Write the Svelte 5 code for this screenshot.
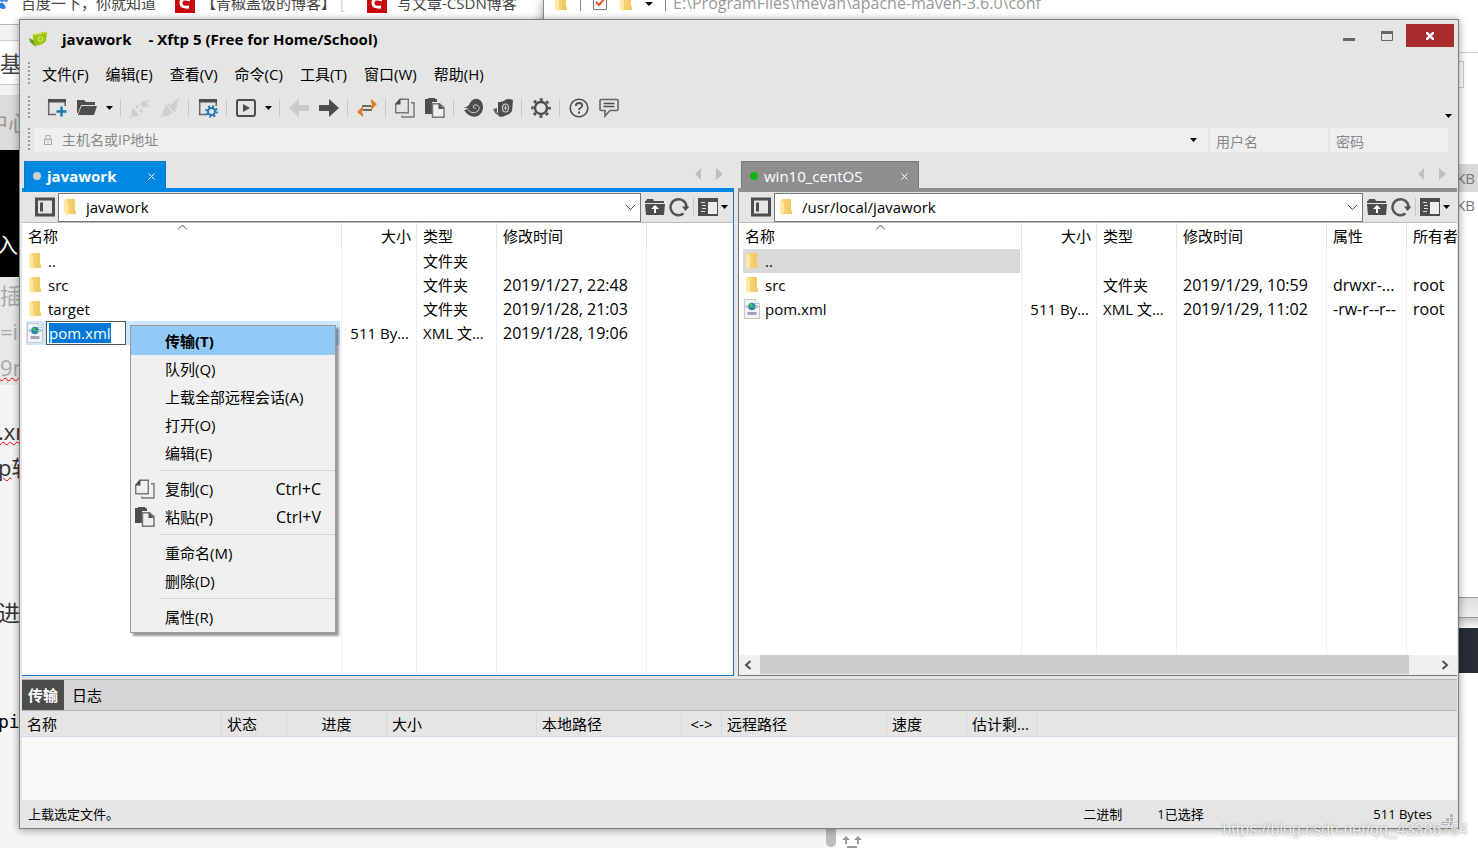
<script>
  import { onMount } from "svelte";

  const menus = ["文件(F)", "编辑(E)", "查看(V)", "命令(C)", "工具(T)", "窗口(W)", "帮助(H)"];

  // "|" is a separator, "v" a dropdown arrow, the rest are icon names
  const tools = [
    "new", "open", "v", "|", "connect", "disconnect", "|", "props", "|", "play", "v", "|",
    "back", "forward", "|", "swap", "|", "copy", "paste", "|", "shell", "xftp", "|",
    "gear", "|", "help", "chat",
  ];

  const local = {
    id: "local",
    title: "javawork",
    path: "javawork",
    columns: [
      { name: "名称", width: 320, sorted: true },
      { name: "大小", width: 75 },
      { name: "类型", width: 80 },
      { name: "修改时间", width: 150 },
      { name: "" },
    ],
    rows: [
      { icon: "folder", cells: ["..", "", "文件夹", "", ""] },
      { icon: "folder", cells: ["src", "", "文件夹", "2019/1/27, 22:48", ""] },
      { icon: "folder", cells: ["target", "", "文件夹", "2019/1/28, 21:03", ""] },
      { icon: "xml", state: "renaming", cells: ["pom.xml", "511 By...", "XML 文...", "2019/1/28, 19:06", ""] },
    ],
  };

  const remote = {
    id: "remote",
    title: "win10_centOS",
    path: "/usr/local/javawork",
    columns: [
      { name: "名称", width: 283, sorted: true },
      { name: "大小", width: 75 },
      { name: "类型", width: 80 },
      { name: "修改时间", width: 150 },
      { name: "属性", width: 80 },
      { name: "所有者" },
    ],
    rows: [
      { icon: "folder", state: "inactive", cells: ["..", "", "", "", "", ""] },
      { icon: "folder", cells: ["src", "", "文件夹", "2019/1/29, 10:59", "drwxr-...", "root"] },
      { icon: "xml", cells: ["pom.xml", "511 By...", "XML 文...", "2019/1/29, 11:02", "-rw-r--r--", "root"] },
    ],
  };

  const contextMenu = [
    { label: "传输(T)", active: true },
    { label: "队列(Q)" },
    { label: "上载全部远程会话(A)" },
    { label: "打开(O)" },
    { label: "编辑(E)" },
    null,
    { label: "复制(C)", icon: "copy", keys: "Ctrl+C" },
    { label: "粘贴(P)", icon: "paste", keys: "Ctrl+V" },
    null,
    { label: "重命名(M)" },
    { label: "删除(D)" },
    null,
    { label: "属性(R)" },
  ];

  const transferColumns = [
    { name: "名称", width: 200 },
    { name: "状态", width: 65 },
    { name: "进度", width: 100, center: true },
    { name: "大小", width: 150 },
    { name: "本地路径", width: 145 },
    { name: "<->", width: 40, center: true },
    { name: "远程路径", width: 165 },
    { name: "速度", width: 80 },
    { name: "估计剩...", width: 70 },
    { name: "" },
  ];

  let fileName = $state("pom.xml");

  // the name being edited starts out fully selected
  onMount(() => {
    const renameInput = document.querySelector("#rename");
    renameInput.focus();
    renameInput.select();
  });
</script>

{#snippet icon(name)}
  {#if name === "folder"}
    <svg class="folder" width="14" height="18" viewBox="0 0 14 18">
      <path d="M3 1h9v11l1 1v3H3z" fill="#f7d272" />
      <path d="M8 1h4v11l1 1v3H8z" fill="#eec35c" opacity=".5" />
      <path d="M1 1l4 3v13.500L1 15.500z" fill="#ffe8a6" />
    </svg>
  {:else if name === "xml"}
    <svg width="17" height="20" viewBox="0 0 17 20">
      <path d="M.5.500h11l4 4v15H.5z" fill="#f4f4f4" stroke="#c6c6c6" />
      <path d="M11.500.500v4h4" fill="#fff" stroke="#c6c6c6" />
      <circle cx="8" cy="7.500" r="3.800" fill="#2a7fc4" />
      <path d="M5.500 5.500q2-2 3 0t-1 3q-2 0-2-3M9.500 7.500l2-1v2l-2 2z" fill="#4fc04f" />
      <path d="M3.500 6L2 7.500 3.500 9M12.500 6L14 7.500 12.500 9" fill="none" stroke="#7b8794" />
      <path d="M3.500 13h9v3h-9z" fill="#a3a3b5" />
    </svg>
  {:else}
    <svg width="20" height="20" viewBox="0 0 20 20" fill="none" stroke="#4d4d4d" stroke-width="2">
      {#if name === "new"}
        <path d="M9 16.500H1.700V3h16.500v5" stroke-width="1.500" stroke="#666" />
        <path d="M1 1h18v3.500H1z" fill="#4d4d4d" stroke="none" />
        <path d="M14.500 8.500v10M9.500 13.500h10" stroke="#1b79ab" stroke-width="2.500" />
      {:else if name === "open"}
        <path d="M0 2h7l2 2h9v3H4L1 15H0z" fill="#4d4d4d" stroke="none" />
        <path d="M4.500 8H20l-3 9H1z" fill="#4d4d4d" stroke="none" />
      {:else if name === "connect"}
        <g fill="#cfcfcf" stroke="none">
          <path d="M0 20l2-4q-2-3 1-6l6 7q-3 3-5 1z" />
          <path d="M10 6l4-3q2-1 3 0l3-3-3 5q1 3-2 4l-1 1z" />
          <path d="M5 9l2-2 2 2-2 2zM9 13l2-2 2 2-2 2zM12 4l2-2 5 6-2 2z" />
        </g>
      {:else if name === "disconnect"}
        <path d="M0 20l3-5q-1-2 1-4l1-1-1-2 2-1 7 8-2 1-1 0q-2 4-5 2zM7 6l2-1 2 2 2-2 3-3 4-2-3 5q1 3-1 5l-1 2 1 1-2 1z" fill="#cfcfcf" stroke="none" />
      {:else if name === "props"}
        <path d="M8 16.500H1.700V3h16.500v5" stroke-width="1.500" stroke="#666" />
        <path d="M1 1h18v3.500H1z" fill="#4d4d4d" stroke="none" />
        <circle cx="13.500" cy="13.500" r="3.500" stroke="#1b79ab" />
        <circle cx="13.500" cy="13.500" r="5.300" stroke="#1b79ab" stroke-dasharray="2 2.160" />
      {:else if name === "play"}
        <rect x="1" y="2" width="18" height="16" rx="2" />
        <path d="M7 6l7 4-7 4z" fill="#4d4d4d" stroke="none" />
      {:else if name === "back"}
        <path d="M0 10l10-9v6h10v6H10v6z" fill="#cbcbcb" stroke="none" />
      {:else if name === "forward"}
        <path d="M20 10L10 1v6H0v6h10v6z" fill="#4d4d4d" stroke="none" />
      {:else if name === "swap"}
        <path d="M5 8h9M6 12h9" stroke="#666" />
        <path d="M14 1l6 5-6 6V8.500l1-2.500-1-2zM6 8l-6 6 6 5v-3l-1-2 1-2.500z" fill="#e07d1e" stroke="none" />
      {:else if name === "copy"}
        <path d="M5 1.200h8.300v13.500H.7V6zM16 4.700h3V19H7v-1.500" stroke="#777" stroke-width="1.400" />
        <path d="M0 6.500L5.500 0v6.500z" fill="#4d4d4d" stroke="none" />
      {:else if name === "paste"}
        <path d="M0 1h3V0h7v1h2v3H7v12H0z" fill="#4d4d4d" stroke="none" />
        <path d="M7.500 5.700h7l4.500 4v9.500H7.500z" fill="#eee" stroke="#777" stroke-width="1.500" />
        <path d="M13.500 5v6H19z" fill="#555" stroke="none" />
      {:else if name === "shell"}
        <path d="M0 9q5 1 7-4 3-5 8-4 5 2 5 8t-5 9q-8 3-14-6l5-1z" fill="#4d4d4d" stroke="none" />
        <path d="M5 12q5 5 10 1 3-4-1-6-4-1-4 2 1 2 3 1" stroke="#ccc" stroke-width="1" />
      {:else if name === "xftp"}
        <path d="M5 4q5 0 7-2 3-2 8 0l-1 11q-3 5-12 6L5 16z" fill="#4d4d4d" stroke="none" />
        <path d="M4 10l-4 1 2 4 5 4-3-5z" fill="#666" stroke="none" />
        <ellipse cx="12.500" cy="10" rx="3" ry="4" stroke="#ccc" stroke-width="1.200" />
        <path d="M12.500 7.500v4.500M11 10h3" stroke="#ccc" stroke-width="1" />
      {:else if name === "gear"}
        <circle cx="10" cy="10" r="6" stroke-width="2.400" />
        <circle cx="10" cy="10" r="8.500" stroke-width="2.600" stroke-dasharray="3 3.676" stroke-dashoffset="1.500" />
      {:else if name === "help"}
        <circle cx="10" cy="10" r="8.800" stroke-width="1.600" />
        <path d="M6.800 8q0-3 3.200-3t3.200 2.500q0 1.500-2 2.500-1.200.5-1.200 2" stroke-width="1.800" />
        <path d="M9 13.500h2v2H9z" fill="#4d4d4d" stroke="none" />
      {:else if name === "chat"}
        <path d="M2 1.500h16q1 0 1 1v9q0 1-1 1h-7L6 18v-5.500H2q-1 0-1-1v-9q0-1 1-1z" stroke="#666" stroke-width="1.600" />
        <path d="M4.500 5.500h11M4.500 8.500h11" stroke-width="1.500" />
      {:else if name === "sidebar"}
        <path d="M1.500 2h17v16h-17z" stroke-width="3" />
        <path d="M5 5.500h3v9H5z" fill="#4d4d4d" stroke="none" />
      {:else if name === "up"}
        <path d="M0 6V4h1l1-2h6l1 2h10v2z" fill="#4d4d4d" stroke="none" />
        <path d="M0 7h20l-1 11H1z" fill="#4d4d4d" stroke="none" />
        <path d="M10 8l4 4h-3v4H9v-4H6z" fill="#fff" stroke="none" />
      {:else if name === "refresh"}
        <path d="M14.500 16.500A8 8 0 1 1 17.500 10" stroke="#555" stroke-width="2.500" />
        <path d="M13 9.500h7.500l-4 4.500z" fill="#4d4d4d" stroke="none" />
      {:else if name === "view"}
        <path d="M0 1h20v18H0z" fill="#4d4d4d" stroke="none" />
        <path d="M10 5h9v12h-9z" fill="#eee" stroke="none" />
        <path d="M3 5.500h4M4 8.500h4M4 11.500h4M3 14.500h4" stroke="#ddd" stroke-width="1" />
      {/if}
    </svg>
  {/if}
{/snippet}

{#snippet caret()}
  <svg width="7" height="4" viewBox="0 0 7 4"><path d="M0 0h7L3.500 4z" fill="#000" /></svg>
{/snippet}

{#snippet csdn()}
  <svg class="csdn" width="20" height="20" viewBox="0 0 20 20">
    <path d="M0 0h20v20H0z" fill="#c90a0a" />
    <path d="M15 7q-9-3-9 3 0 5 8 4" fill="none" stroke="#fff" stroke-width="3" />
  </svg>
{/snippet}

{#snippet pane(p)}
  <section class="pane {p.id}">
    <div class="tabs">
      <div class="tab">
        <span class="dot"></span>
        <span class="tab-title">{p.title}</span>
        <button class="tab-close" aria-label="关闭">
          <svg width="7" height="7" viewBox="0 0 7 7"><path d="M.5.500l6 6M6.500.500l-6 6" stroke="#fff" /></svg>
        </button>
      </div>
      <div class="tab-arrows">
        <svg width="30" height="12" viewBox="0 0 30 12"><path d="M7 0v12L1 6zM22 0v12l7-6z" fill="#bfbfbf" /></svg>
      </div>
    </div>
    <div class="address">
      <button aria-label="侧栏">{@render icon("sidebar")}</button>
      <div class="path">
        {@render icon("folder")}
        <input id="path-{p.id}" aria-label="路径" value={p.path} />
        <button aria-label="历史">
          <svg width="11" height="7" viewBox="0 0 11 7"><path d="M1 1l4.500 4.500L10 1" fill="none" stroke="#444" /></svg>
        </button>
      </div>
      <button aria-label="上一级">{@render icon("up")}</button>
      <button aria-label="刷新">{@render icon("refresh")}</button>
      <i class="line"></i>
      <button aria-label="视图">{@render icon("view")}</button>
      <button class="drop" aria-label="视图选项">{@render caret()}</button>
    </div>
    <div class="list">
      <table>
        <colgroup>
          {#each p.columns as col}
            <col style:width={col.width ? col.width + "px" : null} />
          {/each}
        </colgroup>
        <thead>
          <tr>
            {#each p.columns as col}
              <th>
                {col.name}
                {#if col.sorted}
                  <svg class="sort" width="11" height="6" viewBox="0 0 11 6"><path d="M1 5.500L5.500 1 10 5.500" fill="none" stroke="#555" /></svg>
                {/if}
              </th>
            {/each}
          </tr>
        </thead>
        <tbody>
          {#each p.rows as row}
            <tr class={row.state}>
              {#each row.cells as cell, i}
                <td>
                  {#if i === 0}
                    <div class="name">
                      <span class="file-icon">{@render icon(row.icon)}</span>
                      {#if row.state === "renaming"}
                        <input id="rename" aria-label="文件名" bind:value={fileName} />
                      {:else}
                        <span>{cell}</span>
                      {/if}
                    </div>
                  {:else}
                    {cell}
                  {/if}
                </td>
              {/each}
            </tr>
          {/each}
          <tr class="rest">
            {#each p.columns as col}<td></td>{/each}
          </tr>
        </tbody>
      </table>
      {#if p.id === "remote"}
        <div class="scrollbar">
          <button aria-label="向左滚动">
            <svg width="8" height="10" viewBox="0 0 8 10"><path d="M6.500 1l-4.500 4 4.500 4" fill="none" stroke="#505050" stroke-width="2" /></svg>
          </button>
          <div class="track"><div class="thumb"></div></div>
          <button aria-label="向右滚动">
            <svg width="8" height="10" viewBox="0 0 8 10"><path d="M1.500 1L6 5 1.500 9" fill="none" stroke="#505050" stroke-width="2" /></svg>
          </button>
        </div>
      {:else}
        <div class="context-menu" role="menu">
          {#each contextMenu as item}
            {#if item}
              <button role="menuitem" class:active={item.active}>
                <span class="menu-icon">{#if item.icon}{@render icon(item.icon)}{/if}</span>
                <span class="menu-label">{item.label}</span>
                {#if item.keys}<span class="keys">{item.keys}</span>{/if}
              </button>
            {:else}
              <hr />
            {/if}
          {/each}
        </div>
      {/if}
    </div>
  </section>
{/snippet}

<div class="desktop">
  <!-- windows lying behind -->
  <div class="browser">
    <div class="browser-tabs">
      <svg width="9" height="14" viewBox="0 0 9 14" fill="#2f7de1"><circle cx="2" cy="4" r="2" /><circle cx="6" cy="4" r="2" /><path d="M0 7q4-1 6 5-3 2-6 0z" /></svg>
      <span class="t1">百度一下，你就知道</span>
      {@render csdn()}
      <span class="t2">【青椒盖饭的博客】 <span class="faded">[</span></span>
      {@render csdn()}
      <span>写文章-CSDN博客</span>
    </div>
    <div class="strip s1"></div>
    <div class="strip s2">基</div>
    <div class="strip s3"></div>
    <div class="strip s4">中心</div>
    <div class="strip s5">入</div>
    <div class="strip s6">
      <span>插入</span>
      <span>=in</span>
      <span class="wavy">9m</span>
    </div>
    <div class="strip s7">
      <span class="wavy">.xm</span>
      <span><span class="wavy">p</span>软</span>
    </div>
    <div class="strip s8">进行</div>
    <div class="strip s9">pi</div>
    <div class="page-thumb"></div>
  </div>
  <div class="explorer">
    <div class="explorer-title">
      {@render icon("folder")}
      <i></i>
      <svg width="14" height="14" viewBox="0 0 14 14"><path d="M.5.500h13v13H.5z" fill="#fff" stroke="#777" /><path d="M3 6l3 3 6-7" fill="none" stroke="#e8561c" stroke-width="2" /></svg>
      {@render icon("folder")}
      <svg width="8" height="8" viewBox="0 0 8 8"><path d="M1 0h6v1H1zM0 3h8L4 7z" /></svg>
      <i></i>
      <span>E:\ProgramFiles\mevan\apache-maven-3.6.0\conf</span>
    </div>
    <div class="edge e1"></div>
    <div class="edge e2"></div>
    <div class="edge e3">KB</div>
    <div class="edge e4">KB</div>
    <div class="edge e5"></div>
    <div class="edge e6"></div>
    <div class="edge e7"></div>
    <svg class="face" width="22" height="14" viewBox="0 0 22 14" fill="#999"><path d="M5 0l4 4H6v4H4V4H1zM17 0l4 4h-3v4h-2V4h-3zM6 10h10v3H6z" /></svg>
  </div>

  <main class="window">
    <header class="titlebar">
      <svg width="18" height="16" viewBox="0 0 18 16">
        <path d="M4 3q5 0 7-1 3-2 7-1l-1 9q-3 4-11 5L4 12z" fill="#9cc60c" />
        <path d="M0 7l4 2 3 7-6-5z" fill="#6c9e24" />
        <path d="M5 3.500q5 0 7-1 3-1 5-1" fill="none" stroke="#d8ef5a" />
        <ellipse cx="11.500" cy="8" rx="2" ry="2.500" fill="none" stroke="#dff07a" />
      </svg>
      <h1><span>javawork</span><span>- Xftp 5 (Free for Home/School)</span></h1>
      <div class="controls">
        <button aria-label="最小化"><svg width="12" height="14" viewBox="0 0 12 14"><path d="M0 9h12v3H0z" fill="#666" /></svg></button>
        <button aria-label="最大化"><svg width="12" height="12" viewBox="0 0 12 12"><path d="M.5 1.500h11v9H.5z" fill="none" stroke="#666" /><path d="M0 1h12v3H0z" fill="#666" /></svg></button>
        <button class="close" aria-label="关闭"><svg width="8" height="8" viewBox="0 0 8 8"><path d="M0 0l8 8M8 0L0 8" stroke="#fff" stroke-width="2.500" /></svg></button>
      </div>
    </header>

    <nav class="menubar">
      <i class="grip"></i>
      {#each menus as menu}
        <button>{menu}</button>
      {/each}
    </nav>

    <div class="toolbar">
      <i class="grip"></i>
      {#each tools as tool}
        {#if tool === "|"}
          <i class="line"></i>
        {:else if tool === "v"}
          <button class="drop" aria-label="更多">{@render caret()}</button>
        {:else}
          <button aria-label={tool}>{@render icon(tool)}</button>
        {/if}
      {/each}
      <button class="overflow" aria-label="工具栏选项">{@render caret()}</button>
    </div>

    <form class="hostbar">
      <i class="grip"></i>
      <div class="field host">
        <svg width="10" height="12" viewBox="0 0 10 12"><path d="M1.500 5.500h7v5h-7zM3 5V1.500h4V5M5 7v2" fill="none" stroke="#aaa" /></svg>
        <input id="host" aria-label="主机名或IP地址" placeholder="主机名或IP地址" />
        <button type="button" aria-label="主机列表">{@render caret()}</button>
      </div>
      <div class="field"><input id="user" aria-label="用户名" placeholder="用户名" /></div>
      <div class="field"><input id="password" type="password" aria-label="密码" placeholder="密码" /></div>
    </form>

    <div class="panes">
      {@render pane(local)}
      {@render pane(remote)}
    </div>

    <section class="transfers">
      <div class="transfer-tabs">
        <button class="selected">传输</button>
        <button>日志</button>
      </div>
      <table>
        <colgroup>
          {#each transferColumns as col}
            <col style:width={col.width ? col.width + "px" : null} />
          {/each}
        </colgroup>
        <thead>
          <tr>
            {#each transferColumns as col}
              <th class:center={col.center}>{col.name}</th>
            {/each}
          </tr>
        </thead>
      </table>
      <div class="transfer-body"></div>
    </section>

    <footer class="statusbar">
      <span class="message">上载选定文件。</span>
      <span class="mode">二进制</span>
      <span class="count">1已选择</span>
      <span>511 Bytes</span>
      <svg width="12" height="12" viewBox="0 0 12 12" fill="#b5b5b5"><path d="M8 0h3v3H8zM4 4h3v3H4zM8 4h3v3H8zM0 8h3v3H0zM4 8h3v3H4zM8 8h3v3H8z" /></svg>
    </footer>
  </main>

  <div class="watermark">https://blog.csdn.net/qq_43386754</div>
</div>

<style>
  :global(body) {
    background: #fff;
  }

  .desktop {
    position: relative;
    display: flex;
    box-sizing: border-box;
    min-height: 100vh;
    padding: 19px;
    overflow: hidden;
    font-family: "Open Sans", "Noto Sans CJK SC", sans-serif;
    font-size: 15px;
    line-height: 20px;
    color: #000;
  }

  button {
    display: flex;
    align-items: center;
    justify-content: center;
    padding: 0;
    border: 0;
    background: none;
    font: inherit;
    color: inherit;
  }

  input {
    min-width: 0;
    padding: 0;
    border: 0;
    outline: 0;
    background: none;
    font: inherit;
    color: inherit;
  }

  svg {
    display: block;
    flex: none;
  }

  /* background windows */
  .browser {
    position: absolute;
    inset: 0;
    background: #f5f5f5;
  }

  .browser-tabs {
    display: flex;
    align-items: center;
    height: 24px;
    background: #fff;
    border-bottom: 1px solid #b9b9b9;
    color: #444;
    white-space: nowrap;
  }

  .browser-tabs > * {
    margin-top: -18px;
  }

  .t1 {
    width: 142px;
    margin-left: 12px;
  }

  .csdn {
    margin-right: 10px;
    margin-left: 12px;
  }

  .t2 {
    width: 154px;
    margin-left: -4px;
  }

  .faded {
    color: #ccc;
  }

  .strip {
    position: absolute;
    left: 0;
    width: 40px;
    overflow: hidden;
    white-space: nowrap;
    font-size: 22px;
  }

  .s1 {
    top: 25px;
    height: 15px;
    background: #f2f2f2;
    border-bottom: 1px solid #ccc;
  }

  .s2 {
    top: 41px;
    height: 43px;
    line-height: 44px;
    background: #fff;
    border-bottom: 1px solid #ccc;
    color: #444;
  }

  .s3 {
    top: 85px;
    height: 10px;
    background: #f2f2f2;
  }

  .s4 {
    top: 95px;
    height: 55px;
    line-height: 54px;
    background: #dcdcdc;
    color: #999;
    text-indent: -14px;
  }

  .s5 {
    top: 150px;
    height: 127px;
    line-height: 188px;
    background: #000;
    color: #fff;
    text-indent: -4px;
  }

  .s6 {
    top: 277px;
    height: 108px;
    line-height: 36px;
    background: #e8e8e8;
    color: #aaa;
  }

  .s6 > span,
  .s7 > span {
    display: block;
  }

  .s7 {
    top: 413px;
    line-height: 36px;
    color: #333;
    text-indent: -2px;
  }

  .wavy {
    text-decoration: underline wavy #f00 1px;
  }

  .s8 {
    top: 594px;
    line-height: 36px;
    color: #333;
    text-indent: -2px;
  }

  .s9 {
    top: 704px;
    font-family: "DejaVu Sans Mono", monospace;
    font-size: 18px;
    line-height: 36px;
    text-indent: -2px;
  }

  .page-thumb {
    position: absolute;
    bottom: 1px;
    left: 826px;
    width: 10px;
    height: 40px;
    border-radius: 5px;
    background: #bcbcbc;
  }

  .explorer {
    position: absolute;
    inset: 0 0 0 543px;
    border-left: 1px solid #888;
    background: #fff;
    box-shadow: 0 0 10px rgba(0, 0, 0, 0.4);
    clip-path: polygon(-16px 0, 100% 0, 100% 100%, 293px 100%, 293px 200px, -16px 200px);
  }

  .explorer-title {
    display: flex;
    align-items: center;
    gap: 12px;
    height: 24px;
    padding-left: 10px;
    margin-top: -9px;
    font-size: 16px;
    color: #999;
  }

  .explorer-title i {
    width: 1px;
    height: 16px;
    background: #888;
  }

  .explorer-title span {
    margin-left: -5px;
  }

  .edge {
    position: absolute;
    right: 0;
    width: 30px;
    box-sizing: border-box;
    padding-right: 3px;
    text-align: right;
    font-size: 15px;
    line-height: 28px;
    color: #777;
  }

  .e1 {
    top: 52px;
    height: 1px;
    background: #ccc;
  }

  .e2 {
    top: 61px;
    right: 14px;
    height: 27px;
    border: 1px solid #ccc;
  }

  .e3 {
    top: 164px;
    height: 28px;
    background: #d9d9d9;
  }

  .e4 {
    top: 191px;
  }

  .e5 {
    top: 597px;
    height: 21px;
    border-top: 1px solid #999;
    border-bottom: 1px solid #999;
    background: linear-gradient(#ddd, #f0f0f0);
  }

  .e6 {
    top: 618px;
    height: 10px;
    background: linear-gradient(#ccc, #f8f8f8);
  }

  .e7 {
    top: 628px;
    height: 45px;
    background: #282c34;
  }

  .face {
    position: absolute;
    bottom: -2px;
    left: 297px;
  }

  /* main window */
  .window {
    position: relative;
    display: flex;
    flex: 1;
    flex-direction: column;
    min-width: 0;
    border: 1px solid #7f7f7f;
    background: #e5e5e5;
    box-shadow: 0 1px 8px rgba(0, 0, 0, 0.4);
  }

  .titlebar {
    display: flex;
    align-items: center;
    height: 38px;
    padding-left: 9px;
  }

  h1 {
    display: flex;
    flex: 1;
    gap: 17px;
    margin: 0 0 0 15px;
    font-size: 15px;
    line-height: 20px;
    font-weight: bold;
  }

  .controls {
    display: flex;
    align-self: flex-start;
    margin: 4px 4px 0 0;
  }

  .controls button {
    width: 38px;
    height: 23px;
  }

  .controls .close {
    width: 48px;
    background: #a92c2c;
  }

  .grip {
    width: 2px;
    height: 24px;
    margin: 0 11px 0 8px;
    background: repeating-linear-gradient(#999 0 2px, transparent 2px 4px);
  }

  .menubar {
    display: flex;
    align-items: center;
    gap: 17px;
    height: 32px;
  }

  .menubar .grip {
    margin-right: -5px;
  }

  .toolbar {
    display: flex;
    align-items: center;
    height: 36px;
  }

  .toolbar button {
    width: 30px;
    height: 30px;
  }

  .toolbar .grip {
    margin-right: 12px;
  }

  .toolbar .drop {
    width: 15px;
  }

  .line {
    width: 1px;
    height: 18px;
    margin: 0 4px 0 3px;
    background: #c6c6c6;
  }

  .toolbar .overflow {
    width: 8px;
    height: 16px;
    margin: 16px 6px 0 auto;
  }

  .hostbar {
    display: flex;
    align-items: center;
    gap: 2px;
    margin: 2px 10px 8px 0;
    font-size: 14px;
    color: #888;
  }

  .hostbar .grip {
    margin-right: 2px;
  }

  .field {
    display: flex;
    align-items: flex-end;
    box-sizing: border-box;
    width: 118px;
    height: 24px;
    padding: 0 6px;
    background: #efefef;
  }

  .field input {
    flex: 1;
    height: 20px;
  }

  .field input::placeholder {
    color: #888;
    opacity: 1;
  }

  .host {
    flex: 1;
    align-items: center;
    gap: 9px;
    padding: 0 11px 0 9px;
  }

  .panes {
    display: grid;
    flex: 1;
    grid-template-columns: minmax(0, 712fr) minmax(0, 719fr);
    gap: 4px;
    margin: 0 1px 3px 2px;
  }

  .pane {
    --accent: #0088e2;
    --edge: #0a78c2;
    display: flex;
    flex-direction: column;
    box-sizing: border-box;
  }

  .remote {
    --accent: #8f8f8f;
    --edge: #777;
  }

  .tabs {
    display: flex;
    align-items: flex-end;
    justify-content: space-between;
    height: 28px;
    border-bottom: 4px solid var(--accent);
  }

  .tab {
    display: flex;
    align-items: center;
    box-sizing: border-box;
    width: 142px;
    height: 27px;
    padding: 2px 10px 0 8px;
    margin-left: 2px;
    background: var(--accent);
    border: 1px solid var(--edge);
    border-bottom: 0;
    color: #fff;
  }

  .local .tab {
    font-weight: bold;
  }

  .remote .tab {
    width: 178px;
    margin-left: 3px;
  }

  .dot {
    width: 8px;
    height: 8px;
    border-radius: 50%;
    background: #d3d3d3;
  }

  .remote .dot {
    background: #10b910;
  }

  .tab-title {
    flex: 1;
    margin-left: 6px;
  }

  .tab-arrows {
    align-self: center;
    margin-right: 10px;
  }

  .address {
    display: flex;
    align-items: center;
    gap: 4px;
    height: 30px;
    padding-left: 13px;
    border-right: 1px solid var(--edge);
    border-bottom: 1px solid #bbb;
  }

  .remote .address {
    padding-left: 12px;
    border-right: 0;
    border-left: 1px solid var(--edge);
  }

  .address .line {
    margin: 0;
  }

  .address .drop {
    width: 9px;
    margin-right: 4px;
    margin-left: -2px;
  }

  .remote .drop {
    margin-right: 6px;
  }

  .path {
    display: flex;
    flex: 1;
    align-items: center;
    box-sizing: border-box;
    height: 29px;
    min-width: 0;
    padding: 0 4px;
    margin-left: -1px;
    background: #fff;
    border: 1px solid #777;
  }

  .path input {
    flex: 1;
    margin-left: 9px;
  }

  .list {
    position: relative;
    display: flex;
    flex: 1;
    flex-direction: column;
    background: #fff;
    border-right: 1px solid var(--edge);
    border-bottom: 1px solid var(--edge);
  }

  .remote .list {
    border-right: 0;
    border-left: 1px solid var(--edge);
  }

  table {
    width: 100%;
    table-layout: fixed;
    border-collapse: separate;
    border-spacing: 0;
  }

  .list table {
    flex: 1;
  }

  th,
  td {
    box-sizing: border-box;
    height: 24px;
    padding: 0 0 0 6px;
    overflow: hidden;
    font-weight: normal;
    text-align: left;
    white-space: nowrap;
  }

  .list th {
    position: relative;
    height: 26px;
    border-right: 1px solid #e5e5e5;
  }

  .list td {
    border-right: 1px solid #e8f1fd;
  }

  /* dates, permissions and owners */
  .list td:nth-child(n + 4) {
    font-size: 16px;
  }

  .list th:last-child,
  .list td:last-child {
    border-right: 0;
  }

  .list td:first-child {
    padding: 0 1px 0 4px;
  }

  .list th:nth-child(2),
  .list td:nth-child(2) {
    padding-right: 5px;
    text-align: right;
  }

  .list td:nth-child(2) {
    padding-right: 7px;
  }

  .list .rest td {
    height: auto;
  }

  .sort {
    position: absolute;
    top: 1px;
    left: 50%;
    margin-left: -5px;
  }

  .name {
    display: flex;
    align-items: center;
    height: 24px;
  }

  .file-icon {
    display: flex;
    justify-content: center;
    width: 18px;
    margin-right: 4px;
  }

  .inactive .name {
    background: #d9d9d9;
  }

  .renaming .name {
    background: #cce8ff;
  }

  #rename {
    box-sizing: border-box;
    width: 80px;
    height: 24px;
    padding: 0 2px;
    margin-left: -2px;
    background: #fff;
    border: 1px solid #555;
  }

  #rename::selection {
    background: #0078d7;
    color: #fff;
  }

  .scrollbar {
    display: flex;
    height: 20px;
    background: #f0f0f0;
  }

  .scrollbar button {
    width: 21px;
  }

  .scrollbar svg {
    margin-right: 3px;
  }

  .track {
    flex: 1;
  }

  .thumb {
    width: 96%;
    height: 19px;
    background: #cdcdcd;
  }

  .context-menu {
    position: absolute;
    top: 102px;
    left: 108px;
    width: 204px;
    padding-bottom: 1px;
    background: #f0f0f0;
    border: 1px solid #999;
    box-shadow: 3px 3px 2px rgba(0, 0, 0, 0.4);
  }

  .context-menu button {
    width: 100%;
    height: 28px;
    padding-right: 14px;
  }

  .context-menu .active {
    height: 29px;
    background: #91c9f7;
    font-weight: bold;
  }

  .menu-icon {
    width: 30px;
    padding-left: 4px;
  }

  .menu-label {
    flex: 1;
    text-align: left;
  }

  .keys {
    font-size: 16px;
  }

  hr {
    height: 1px;
    margin: 3px 0 4px 29px;
    border: 0;
    background: #d3d3d3;
  }

  /* transfer list */
  .transfers {
    margin: 0 1px 0 2px;
  }

  .transfer-tabs {
    display: flex;
    height: 30px;
    background: #d6d6d6;
    border-top: 1px solid #b5b5b5;
    border-bottom: 1px solid #b5b5b5;
  }

  .transfer-tabs button {
    padding: 0 8px;
  }

  .transfer-tabs .selected {
    padding: 0 6px;
    background: #4d4d4d;
    color: #fff;
    font-weight: bold;
  }

  .transfers th {
    height: 26px;
    padding-left: 5px;
    border-right: 1px solid #d0dbea;
    border-bottom: 1px solid #d0dbea;
  }

  .transfers th:last-child {
    border-right: 0;
  }

  .transfers .center {
    padding-left: 0;
    text-align: center;
  }

  .transfer-body {
    height: 63px;
    background: #f8f8f8;
  }

  .statusbar {
    display: flex;
    align-items: center;
    height: 28px;
    padding: 0 4px 0 8px;
    font-size: 13px;
  }

  .message {
    flex: 1;
  }

  .mode {
    width: 74px;
  }

  .count {
    width: 216px;
  }

  .statusbar svg {
    align-self: flex-end;
    margin: 0 0 2px 10px;
  }

  .watermark {
    position: absolute;
    right: 10px;
    bottom: 8px;
    font-family: "Liberation Sans", sans-serif;
    font-size: 16px;
    color: rgba(255, 255, 255, 0.8);
    text-shadow: 0 0 2px rgba(0, 0, 0, 0.4);
  }
</style>
